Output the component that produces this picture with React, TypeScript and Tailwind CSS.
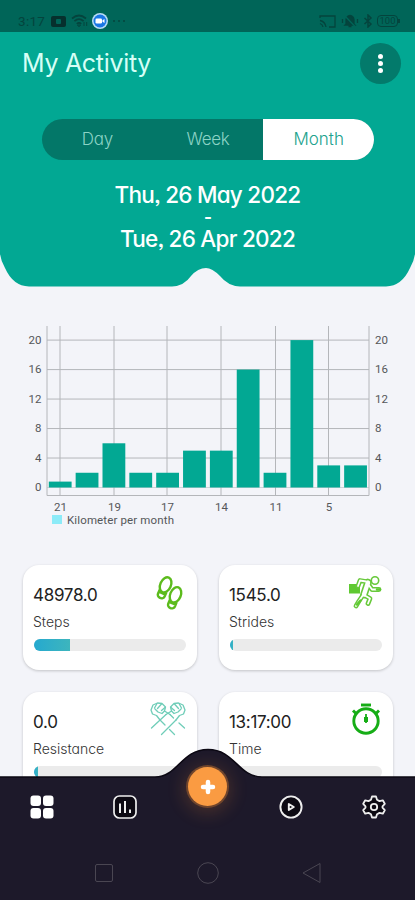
import React from "react";

const values = [0.8, 2, 6, 2, 2, 5, 5, 16, 2, 20, 3, 3];
const yTicks = [0, 4, 8, 12, 16, 20];
const xTicks = [
  { x: 60, label: "21" },
  { x: 114, label: "19" },
  { x: 167, label: "17" },
  { x: 221, label: "14" },
  { x: 275.5, label: "11" },
  { x: 328.5, label: "5" },
];

function StatusBar() {
  return (
    <div className="flex h-8 items-end justify-between bg-[#006558] pr-[15px] pb-[3px] pl-[18px] text-[#04443d]">
      <div className="flex h-4 items-center">
        <span className="w-[33px] font-['Roboto',sans-serif] text-[13.5px] leading-4 tracking-[0.3px]">3:17</span>
        <svg width="15" height="11" viewBox="0 0 15 11">
          <rect width="15" height="11" rx="2" fill="#06302d" />
          <rect x="5" y="3" width="5" height="5" rx="1" fill="#006558" />
        </svg>
        <svg className="ml-[5px]" width="18" height="14" viewBox="0 0 18 14" fill="none" stroke="currentColor" strokeWidth="1.7">
          <path d="M1 4.5Q8 -1.5 15 4.5M3.4 7.2Q8 3 12.6 7.2M5.8 9.8Q8 7.8 10.2 9.8" />
          <path d="M6.5 11 8 12.8 9.5 11zM13 8v4M15.7 8v4" strokeWidth="1" />
        </svg>
        <svg className="ml-[2px]" width="18" height="16" viewBox="0 0 18 16">
          <circle cx="9" cy="8" r="8" fill="#b8dcf5" />
          <circle cx="9" cy="8" r="6.5" fill="#1976e4" />
          <rect x="4.5" y="5.5" width="6.5" height="5" rx="1.3" fill="#fff" />
          <path d="M11.5 7.2 13.5 6v4l-2-1.2z" fill="#fff" />
        </svg>
        <svg className="ml-[3px]" width="14" height="4" viewBox="0 0 14 4" fill="currentColor">
          <circle cx="2" cy="2" r="1" />
          <circle cx="7" cy="2" r="1" />
          <circle cx="12" cy="2" r="1" />
        </svg>
      </div>
      <div className="flex h-4 items-center">
        <svg width="17" height="13" viewBox="0 0 17 13" fill="none" stroke="currentColor" strokeWidth="1.3">
          <path d="M1 3V1h15v11h-6M1 5.5q5 1 6 6.5M1 8.5q2.5.8 3 3.5" />
        </svg>
        <svg className="ml-[5px]" width="18" height="14" viewBox="0 0 18 14" fill="none" stroke="currentColor" strokeWidth="1.3">
          <path d="M5 10V5.5Q5.5 2 9 1.5 12.5 2 13 5.5V10l1 1H4zM7.5 12.5h3" fill="currentColor" />
          <path d="M1.5 5v4M16.5 5v4" />
          <path d="M3.5 1.5 14 12.5" stroke="#006558" />
        </svg>
        <svg className="ml-[4px]" width="10" height="14" viewBox="0 0 10 14" fill="none" stroke="currentColor" strokeWidth="1.5">
          <path d="M1.5 4 8 10 5 13V1l3 3-6.5 6" />
        </svg>
        <div className="ml-[4px] flex h-[12px] w-[21px] items-center justify-center rounded-[4px] border border-[#04443d] font-['Roboto',sans-serif] text-[9.5px] leading-none">
          100
        </div>
        <div className="h-[4px] w-[2px] bg-[#04443d]" />
      </div>
    </div>
  );
}

function Header() {
  return (
    <header className="text-white">
      <div className="flex h-[222px] flex-col bg-[#02a893]">
        <div className="flex h-[62px] shrink-0 items-center justify-between pr-[14px] pl-[22px]">
          <h1 className="text-[25px] leading-8 font-normal tracking-[-0.3px] text-[#d5fff6]">My Activity</h1>
          <button className="flex h-[41px] w-[41px] flex-col items-center justify-center gap-[2px] rounded-full bg-[#037a6b]">
            <span className="h-[5px] w-[5px] rounded-full bg-white" />
            <span className="h-[5px] w-[5px] rounded-full bg-white" />
            <span className="h-[5px] w-[5px] rounded-full bg-white" />
          </button>
        </div>
        <div className="mt-[25px] ml-[42px] grid h-[41px] w-[332px] shrink-0 grid-cols-3 items-center overflow-hidden rounded-full bg-[#037768] text-center text-[17px] font-light text-[#8bd3c5]">
          <span className="tracking-[-0.2px]">Day</span>
          <span className="tracking-[-0.3px]">Week</span>
          <span className="flex h-full items-center justify-center bg-white text-[#20a28d]">Month</span>
        </div>
        <div className="mt-[20px] shrink-0 text-center text-[22.5px] leading-[30px] font-medium tracking-[-0.75px]">
          <p>Thu, 26 May 2022</p>
          <p className="text-[17px] leading-[14px] font-bold">-</p>
          <p>Tue, 26 Apr 2022</p>
        </div>
      </div>
      <svg className="block" width="415" height="33" viewBox="0 0 415 33">
        <path d="M0 0H415Q414 7 410 14Q402 32 386 32.5H240Q228 32 220 22Q212 14 206 14Q198 14 191 22Q184 32 172 32.5H29Q13 32 5 14Q1 7 0 0Z" fill="#02a893" />
      </svg>
    </header>
  );
}

function Chart() {
  const yOf = (v: number) => 200.5 - v * 7.37;
  return (
    <svg className="block" width="415" height="278" viewBox="0 0 415 278" fontFamily="Roboto, sans-serif" fontSize="11.5" fill="#555759">
      <g stroke="#b4b6ba" strokeWidth="1">
        {yTicks.map((t) => (
          <path key={t} d={`M47 ${yOf(t)}H369`} stroke={t === 0 ? "#d0d2d6" : "#b4b6ba"} />
        ))}
        {xTicks.map((t) => (
          <path key={t.label} d={`M${t.x} 39V208`} />
        ))}
        <path d="M47 39V208.5H369V39" fill="none" />
      </g>
      {values.map((v, i) => (
        <rect key={i} x={48.8 + i * 26.85} y={yOf(v)} width="22.8" height={v * 7.37} fill="#02a893" />
      ))}
      {yTicks.map((t) => (
        <g key={t}>
          <text x="41.5" y={yOf(t) + 3.5} textAnchor="end">{t}</text>
          <text x="375" y={yOf(t) + 3.5}>{t}</text>
        </g>
      ))}
      {xTicks.map((t) => (
        <text key={t.label} x={t.x + 0.5} y="224" textAnchor="middle">{t.label}</text>
      ))}
      <rect x="52" y="228" width="10" height="9" fill="#8cebf8" />
      <text x="67" y="237" fontSize="11.5" textLength="107">Kilometer per month</text>
    </svg>
  );
}

function Shoe() {
  return (
    <>
      <ellipse cx="13.2" cy="9.5" rx="5.3" ry="8" />
      <path d="M9.8 16v4.5a3.6 3.2 0 0 0 7.2 0V16M9.8 18.5h7.2" />
    </>
  );
}

function StepsIcon() {
  return (
    <svg className="mr-px" width="34" height="36" viewBox="0 0 34 36" fill="none" stroke="#5cbb1c" strokeWidth="2.4">
      <g transform="rotate(24 13 13)">
        <Shoe />
      </g>
      <g transform="translate(10 10) rotate(22 13 13)">
        <Shoe />
      </g>
    </svg>
  );
}

function StridesIcon() {
  const limbs = "M10 11 12 5.5 18 6.5M20 9 24 14.5 31 14.5M16 20 22 23.5 20 28.5M15 20 11 26 8 31";
  return (
    <svg width="34" height="36" viewBox="0 0 34 36" fill="none" strokeLinejoin="round" strokeLinecap="round">
      <rect x="1" y="9" width="11" height="9.5" fill="#5fc931" />
      <circle cx="27" cy="5.5" r="3.7" stroke="#68c93b" strokeWidth="1.6" />
      <path d={limbs} stroke="#68c93b" strokeWidth="4.8" />
      <path d="M20 7.5 16 19.5" stroke="#68c93b" strokeWidth="7.6" />
      <path d={limbs} stroke="#fff" strokeWidth="1.8" />
      <path d="M20 7.5 16 19.5" stroke="#fff" strokeWidth="4.4" />
      <path d="M9 29.5 12.5 25.500M29 14.5h3" stroke="#5fc931" strokeWidth="2.5" />
    </svg>
  );
}

function Fist() {
  return (
    <>
      <path d="M16 12.5 21.5 9 20.5 5 24 1.5 28.5 1 33 3 35 8 33.5 12 29.5 13.5 26 18" />
      <path d="M21 5.5 24.5 8.5M24.5 2 28.5 6.5M29 1.5 31.5 6M21.5 9 24 11.5 28 10 31 7" />
    </>
  );
}

function FistsIcon() {
  return (
    <svg width="36" height="34" viewBox="0 0 36 34" fill="none" stroke="#6fcdb8" strokeWidth="1.3" strokeLinejoin="round" strokeLinecap="round">
      <path d="M11.5 32.5 26 18M1.5 26 16 12.5" />
      <Fist />
      <g transform="translate(36 0) scale(-1 1)">
        <path d="M11.5 32.5 16.5 27.5M21 23 26 18M1.5 26 7 21M12.5 16 16 12.5" />
        <Fist />
      </g>
    </svg>
  );
}

function TimerIcon() {
  return (
    <svg className="-mr-px" width="32" height="34" viewBox="0 0 32 34" fill="none" stroke="#16ad16" strokeWidth="2.9">
      <circle cx="15" cy="19" r="12.2" />
      <path d="M10 3h10" />
      <path d="M2 8.5 5 11.5M28 8.5 25 11.5" />
      <path d="M15 15v5" strokeWidth="4" />
      <path d="M15 12v9" strokeWidth="1.8" />
    </svg>
  );
}

type CardProps = { value: string; label: string; progress: number; icon: React.ReactNode };

function StatCard({ value, label, progress, icon }: CardProps) {
  return (
    <div className="h-[105px] rounded-[16px] bg-white px-[11px] pt-[10px] shadow-[0_1px_3px_rgba(0,0,0,0.2)]">
      <div className="-ml-px flex h-[36px] justify-between">
        <span className="pt-[8px] text-[17px] leading-[24px] tracking-[-0.3px] text-[#222]">{value}</span>
        {icon}
      </div>
      <p className="-ml-px text-[14px] leading-[22px] font-light text-[#333]">{label}</p>
      <div className="mt-[6px] h-[12px] overflow-hidden rounded-[6px] bg-[#ebebeb]">
        <div className="h-full bg-gradient-to-r from-[#25a9cf] to-[#3db5bd]" style={{ width: progress }} />
      </div>
    </div>
  );
}

function BottomNav() {
  return (
    <nav className="absolute inset-x-0 bottom-0">
      <svg className="block" width="415" height="30" viewBox="0 0 415 30">
        <path d="M-2 29H155C178 29 181 1.5 208 1.5C235 1.5 238 29 262 29H417V33H-2Z" fill="#1d192a" stroke="#0b0813" strokeWidth="1.5" />
      </svg>
      <div className="h-[122px] bg-[#1d192a]">
        <div className="grid h-[57px] grid-cols-5 items-center justify-items-center text-[#eee]">
          <svg width="24" height="24" viewBox="0 0 24 24" fill="#fff">
            <rect x="0.5" y="0.5" width="10.5" height="10.5" rx="3" />
            <rect x="13" y="0.5" width="10.5" height="10.5" rx="3" />
            <rect x="0.5" y="13" width="10.5" height="10.5" rx="3" />
            <rect x="13" y="13" width="10.5" height="10.5" rx="3" />
          </svg>
          <svg width="24" height="24" viewBox="0 0 24 24" fill="none" stroke="currentColor" strokeWidth="1.7">
            <rect x="1" y="1" width="22" height="22" rx="5.5" fill="#0c0912" />
            <path d="M7 8.5V18M12 6v12M17 14.5V18" strokeWidth="2" />
          </svg>
          <div className="relative -top-[20px] flex h-[39px] w-[39px] items-center justify-center rounded-full bg-[#fa9b42] shadow-[0_0_0_2px_#70452c,0_3px_18px_4px_rgba(250,140,50,0.2)]">
            <svg width="16" height="16" viewBox="0 0 16 16" stroke="#fff" strokeWidth="4.5" strokeLinecap="round">
              <path d="M8 3v10M3 8h10" />
            </svg>
          </div>
          <svg width="24" height="24" viewBox="0 0 24 24" fill="none" stroke="currentColor" strokeWidth="1.9" strokeLinejoin="round">
            <circle cx="12" cy="12" r="10.6" fill="#0c0912" />
            <path d="M9.8 9v6l5-3z" />
          </svg>
          <svg width="24" height="24" viewBox="0 0 24 24" fill="#0c0912" stroke="currentColor" strokeWidth="1.8" strokeLinejoin="round">
            <path d="M10 1.5h4l1 3.2 2.5 1.4 3.3-.8 2 3.5-2.3 2.5v1.4l2.3 2.5-2 3.5-3.3-.8-2.5 1.4-1 3.2h-4l-1-3.2-2.5-1.4-3.3.8-2-3.5 2.3-2.5v-1.4L1.2 8.8l2-3.5 3.3.8L9 4.7z" />
            <circle cx="12" cy="12" r="3.2" />
          </svg>
        </div>
        <div className="mt-[26px] flex items-center justify-center gap-[82px] text-[#4a4652]">
          <svg width="22" height="24" viewBox="0 0 22 24" fill="none" stroke="currentColor">
            <rect x="2.5" y="3.5" width="17" height="17" rx="1.5" />
          </svg>
          <svg width="22" height="24" viewBox="0 0 22 24" fill="none" stroke="currentColor">
            <circle cx="11" cy="12" r="10.3" />
          </svg>
          <svg width="22" height="24" viewBox="0 0 22 24" fill="none" stroke="currentColor" strokeLinejoin="round">
            <path d="M19 2.5v19L2 12z" />
          </svg>
        </div>
      </div>
    </nav>
  );
}

export default function App() {
  return (
    <div className="relative h-[900px] w-[415px] overflow-hidden bg-[#f3f4f9] font-['Inter',sans-serif] [font-feature-settings:'cv11','ss03']">
      <StatusBar />
      <Header />
      <Chart />
      <div className="grid grid-cols-2 gap-x-[22px] gap-y-[22px] pr-[22px] pl-[23px]">
        <StatCard value="48978.0" label="Steps" progress={36} icon={<StepsIcon />} />
        <StatCard value="1545.0" label="Strides" progress={3} icon={<StridesIcon />} />
        <StatCard value="0.0" label="Resistance" progress={4} icon={<FistsIcon />} />
        <StatCard value="13:17:00" label="Time" progress={0} icon={<TimerIcon />} />
      </div>
      <BottomNav />
    </div>
  );
}
